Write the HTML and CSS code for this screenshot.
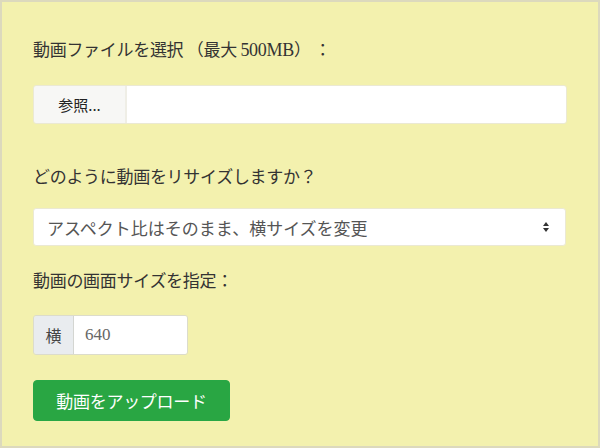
FILE: index.html
```html
<!DOCTYPE html>
<html>
  <head>
    <title>動画のリサイズ</title>
    <link rel="stylesheet" href="styles.css">
  </head>
  <body>
    <form class="page">
      <label class="label label-first">動画ファイルを選択 （最大 <span class="num">500MB</span>） ：</label>
      <div class="file">
        <span class="file-btn">参照...</span>
        <span class="file-name"></span>
      </div>

      <label class="label label-resize">どのように動画をリサイズしますか？</label>
      <div class="select-wrap">
        <select class="select">
          <option>アスペクト比はそのまま、横サイズを変更</option>
          <option>アスペクト比はそのまま、縦サイズを変更</option>
          <option>横と縦のサイズを指定</option>
        </select>
        <svg class="select-arrow" width="8" height="12" viewBox="0 0 8 12">
          <path d="M4 1 L7 5 H1 Z M4 11 L7 7 H1 Z" fill="#333"/>
        </svg>
      </div>

      <label class="label label-size">動画の画面サイズを指定：</label>
      <div class="group">
        <span class="group-addon">横</span>
        <input class="group-input num" type="text" value="640">
      </div>

      <button class="btn-upload" type="submit">動画をアップロード</button>
    </form>
  </body>
</html>
```

FILE: styles.css
```css
html, body {
  margin: 0;
  height: 100%;
}

body {
  background-color: #f3f1ae;
  font-family: "Noto Sans CJK JP", "Noto Sans", sans-serif;
  color: #333;
}

.num {
  font-family: "Liberation Serif", serif;
}

.page {
  box-sizing: border-box;
  height: 448px;
  border: 2px solid #dcd9bd;
  padding: 35px 31px 0 31px;
  display: flex;
  flex-direction: column;
  align-items: flex-start;
}

.label {
  display: block;
  font-size: 17px;
  line-height: 24px;
  letter-spacing: -0.3px;
}

.label .num {
  font-size: 18px;
}

.file {
  margin-top: 23px;
  width: 534px;
  height: 39px;
  display: flex;
  border: 1px solid #ebe9d3;
  box-sizing: border-box;
  border-radius: 3px;
  overflow: hidden;
}

.file-btn {
  width: 91px;
  background-color: #f7f7f5;
  border-right: 2px solid #efeee6;
  font-size: 15px;
  display: flex;
  align-items: center;
  justify-content: center;
  color: #222;
}

.file-name {
  flex: 1;
  background-color: #fff;
}

.label-resize {
  margin-top: 40px;
}

.select-wrap {
  margin-top: 20px;
  position: relative;
  width: 533px;
}

.select {
  appearance: none;
  -webkit-appearance: none;
  width: 100%;
  height: 38px;
  box-sizing: border-box;
  border: 1px solid #ebe9d3;
  border-radius: 3px;
  background-color: #fff;
  padding: 0 30px 0 13px;
  font-family: inherit;
  font-size: 17px;
  color: #555;
}

.select-arrow {
  position: absolute;
  right: 16px;
  top: 13px;
  pointer-events: none;
}

.label-size {
  margin-top: 22px;
}

.group {
  margin-top: 23px;
  display: flex;
  width: 155px;
  height: 40px;
  box-sizing: border-box;
  border: 1px solid #dcdccb;
  border-radius: 3px;
  overflow: hidden;
}

.group-addon {
  width: 39px;
  background-color: #e9ecef;
  border-right: 1px solid #d4d6d2;
  display: flex;
  align-items: center;
  justify-content: center;
  font-size: 16px;
  color: #444;
}

.group-input {
  flex: 1;
  min-width: 0;
  border: none;
  outline: none;
  padding: 0 0 0 11px;
  font-size: 17px;
  color: #666;
  background-color: #fff;
}

.btn-upload {
  margin-top: 25px;
  width: 197px;
  height: 41px;
  border: 1px solid #28a745;
  border-radius: 4px;
  background-color: #29a643;
  color: #fff;
  font-family: inherit;
  font-size: 17px;
  letter-spacing: -0.3px;
  padding: 0;
}
```
